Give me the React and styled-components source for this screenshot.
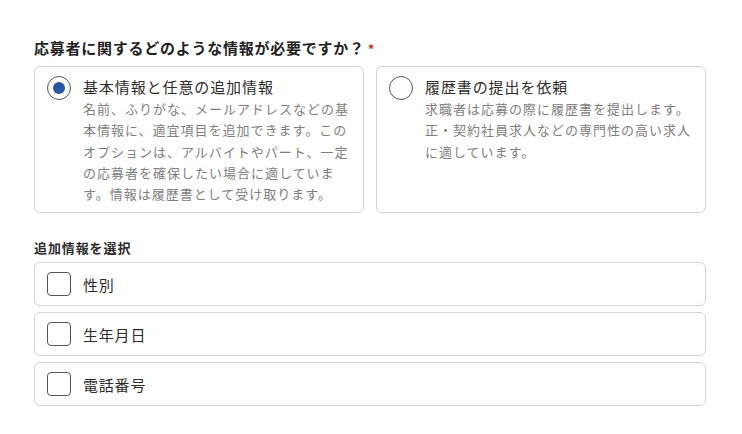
import React, { useState } from "react";
import styled, { createGlobalStyle } from "styled-components";

const GlobalStyle = createGlobalStyle`
	body {
		margin: 0;
		background: #fff;
		font-family: "Noto Sans CJK JP", "Noto Sans", sans-serif;
		color: #333;
	}
`;

const Page = styled.div`
	width: 672px;
	padding: 38px 36px 0 34px;
`;

const Question = styled.div`
	font-size: 15px;
	font-weight: 700;
	letter-spacing: 0.75px;
	color: #222;
	line-height: 20px;
	margin-bottom: 7px;
	span {
		color: #c0392b;
		font-size: 13px;
		margin-left: 3px;
	}
`;

const OptionGrid = styled.div`
	display: grid;
	grid-template-columns: 1fr 1fr;
	gap: 12px;
`;

const OptionCard = styled.label`
	display: flex;
	gap: 12px;
	align-items: flex-start;
	border: 1px solid #d4d4d4;
	border-radius: 6px;
	padding: 8px 10px 10px 12px;
	height: 147px;
	box-sizing: border-box;
	cursor: pointer;
`;

const Radio = styled.span`
	flex: none;
	width: 24px;
	height: 24px;
	border: 1px solid #555;
	border-radius: 50%;
	box-sizing: border-box;
	display: flex;
	align-items: center;
	justify-content: center;
	margin-top: 1px;
	&::after {
		content: "";
		width: 12px;
		height: 12px;
		border-radius: 50%;
		background: ${(p) => (p.$checked ? "#2557a7" : "transparent")};
	}
`;

const OptionBody = styled.div`
	display: flex;
	flex-direction: column;
`;

const OptionTitle = styled.div`
	font-size: 15px;
	letter-spacing: 0.9px;
	line-height: 24px;
	color: #2d2d2d;
`;

const OptionDesc = styled.div`
	font-size: 13px;
	letter-spacing: 1px;
	line-height: 21.25px;
	color: #808080;
	margin-top: -1px;
`;

const SectionLabel = styled.div`
	font-size: 13px;
	font-weight: 700;
	letter-spacing: 0.9px;
	color: #2d2d2d;
	line-height: 16px;
	margin: 27px 0 6px;
`;

const CheckList = styled.div`
	display: flex;
	flex-direction: column;
	gap: 6px;
`;

const CheckRow = styled.label`
	display: flex;
	align-items: center;
	gap: 12px;
	height: 44px;
	box-sizing: border-box;
	border: 1px solid #d4d4d4;
	border-radius: 6px;
	padding: 0 12px;
	cursor: pointer;
`;

const Box = styled.span`
	flex: none;
	width: 24px;
	height: 24px;
	border: 1px solid #555;
	border-radius: 4px;
	box-sizing: border-box;
`;

const CheckText = styled.span`
	font-size: 15px;
	letter-spacing: 0.8px;
	color: #2d2d2d;
`;

const options = [
	{
		title: "基本情報と任意の追加情報",
		desc: "名前、ふりがな、メールアドレスなどの基本情報に、適宜項目を追加できます。このオプションは、アルバイトやパート、一定の応募者を確保したい場合に適しています。情報は履歴書として受け取ります。",
	},
	{
		title: "履歴書の提出を依頼",
		desc: "求職者は応募の際に履歴書を提出します。正・契約社員求人などの専門性の高い求人に適しています。",
	},
];

const extras = ["性別", "生年月日", "電話番号"];

const App = () => {
	const [selected, setSelected] = useState(0);
	return (
		<>
			<GlobalStyle />
			<Page>
				<Question>
					応募者に関するどのような情報が必要ですか？<span>*</span>
				</Question>
				<OptionGrid>
					{options.map((o, i) => (
						<OptionCard key={o.title} onClick={() => setSelected(i)}>
							<Radio $checked={selected === i} />
							<OptionBody>
								<OptionTitle>{o.title}</OptionTitle>
								<OptionDesc>{o.desc}</OptionDesc>
							</OptionBody>
						</OptionCard>
					))}
				</OptionGrid>
				<SectionLabel>追加情報を選択</SectionLabel>
				<CheckList>
					{extras.map((e) => (
						<CheckRow key={e}>
							<Box />
							<CheckText>{e}</CheckText>
						</CheckRow>
					))}
				</CheckList>
			</Page>
		</>
	);
};

export default App;
